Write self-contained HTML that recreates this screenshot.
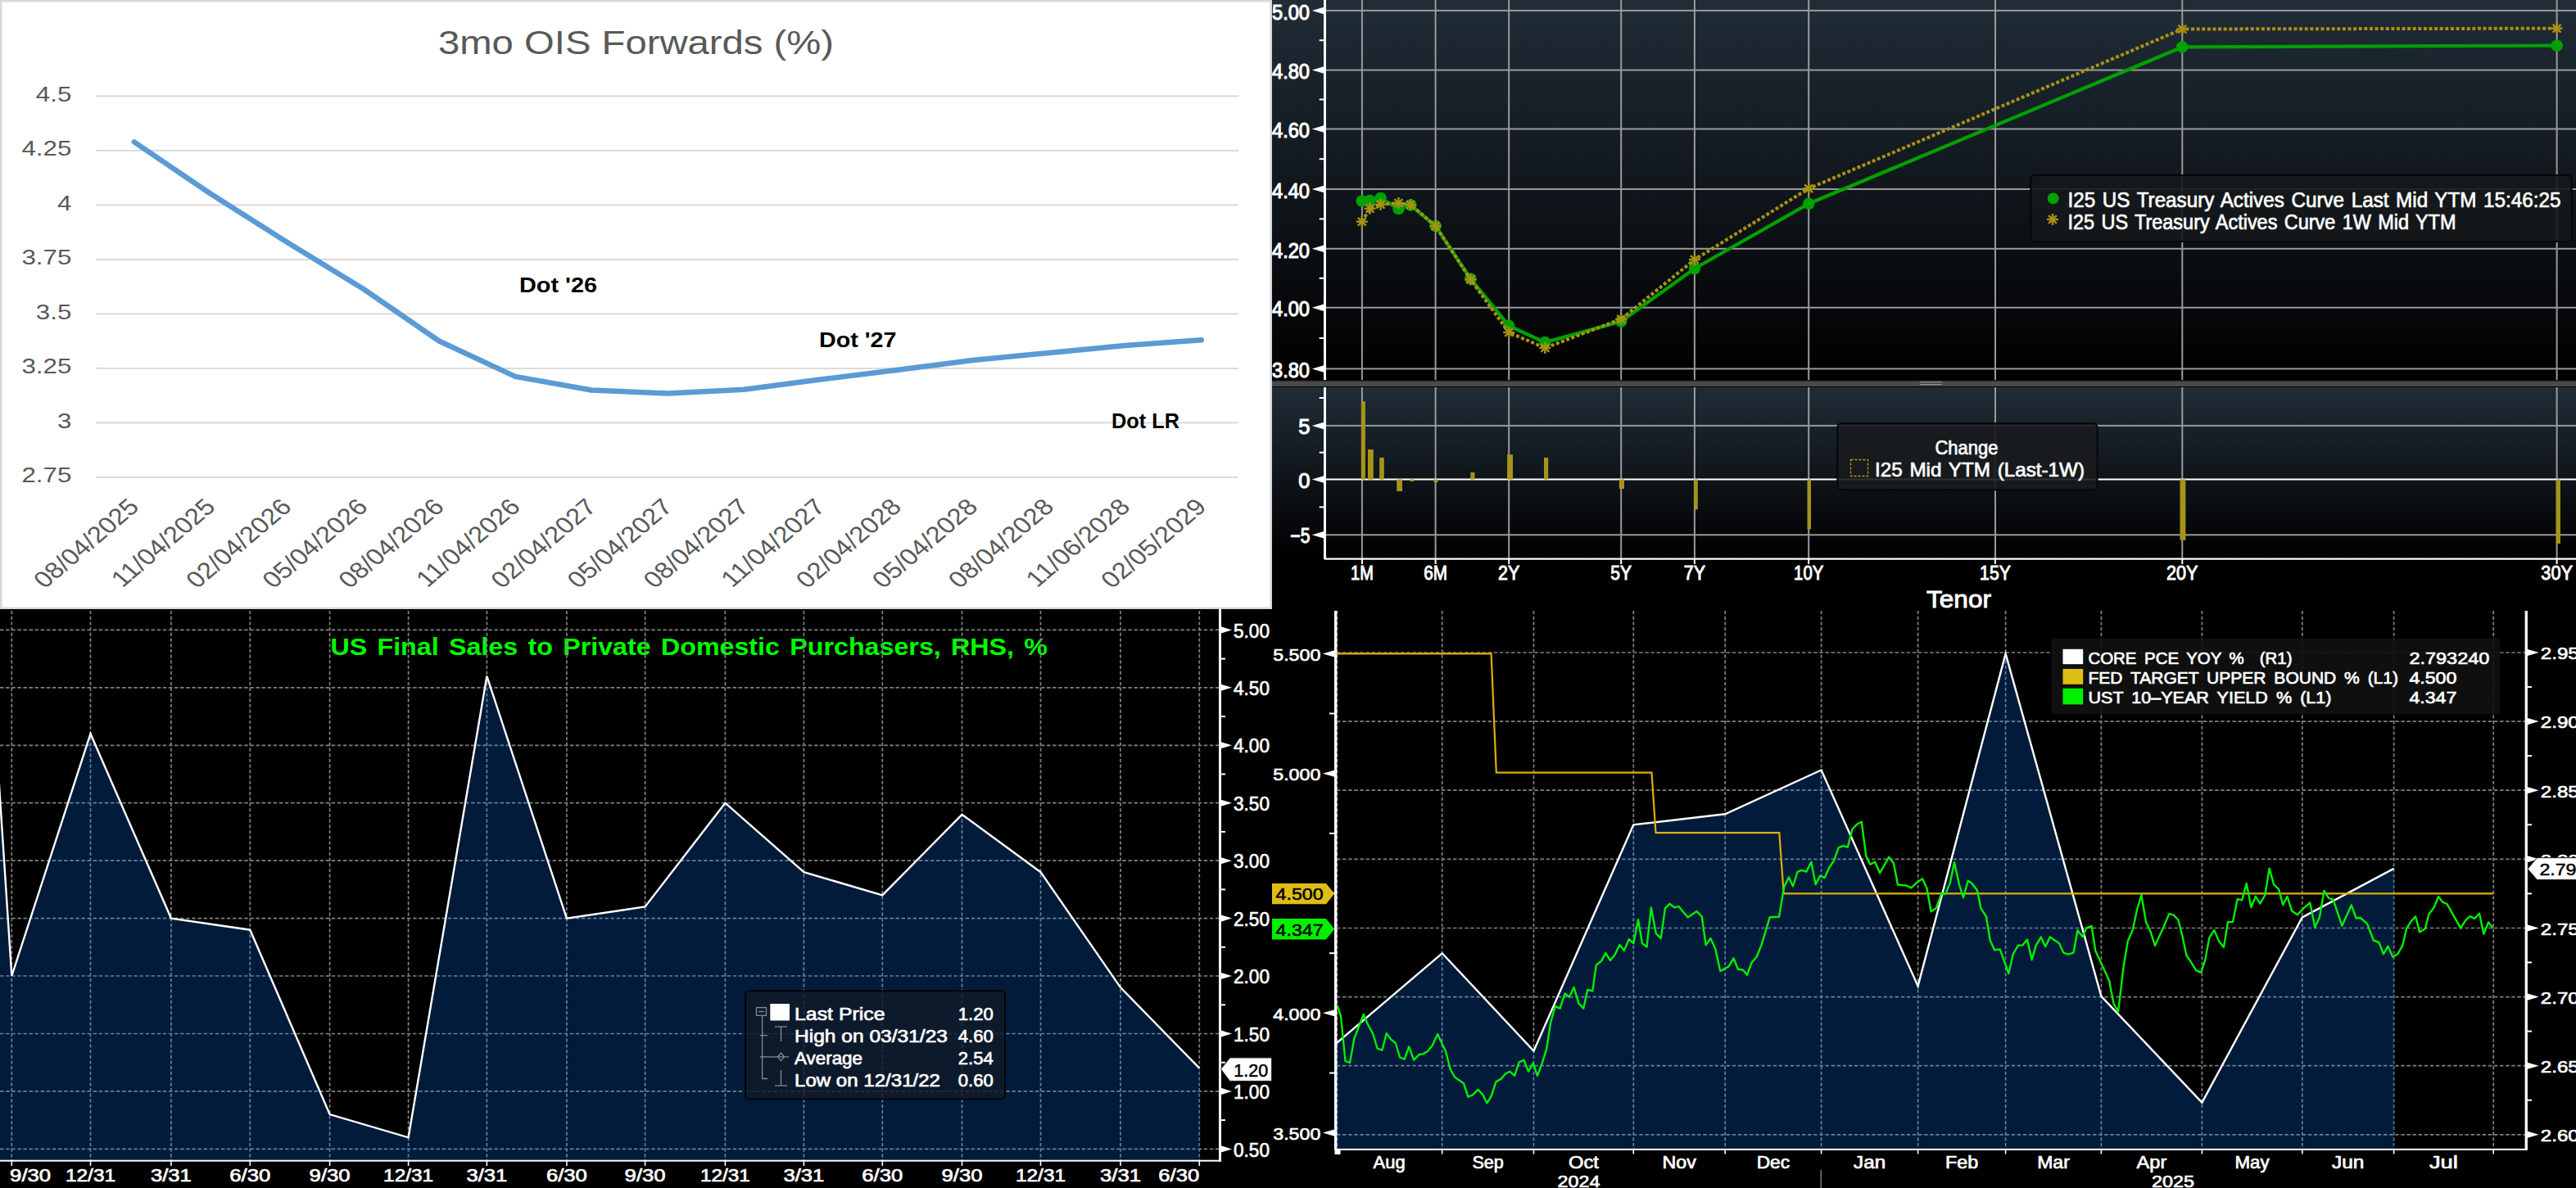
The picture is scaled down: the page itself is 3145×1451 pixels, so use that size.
<!DOCTYPE html><html><head><meta charset="utf-8"><style>html,body{margin:0;padding:0;background:#000;overflow:hidden}svg{display:block}text{font-family:"Liberation Sans", sans-serif}</style></head><body>
<svg width="3145" height="1451" viewBox="0 0 3145 1451">
<rect width="3145" height="1451" fill="#000"/>
<rect x="0" y="0" width="1553" height="744" fill="#ffffff"/>
<rect x="1" y="1" width="1551" height="742" fill="none" stroke="#d9d9d9" stroke-width="3"/>
<rect x="117" y="116.4" width="1395" height="2" fill="#d9d9d9"/>
<text x="0" y="0" font-size="26.5" fill="#595959" text-anchor="end" transform="translate(87.3,123.7) scale(1.18,1)">4.5</text>
<rect x="117" y="182.9" width="1395" height="2" fill="#d9d9d9"/>
<text x="0" y="0" font-size="26.5" fill="#595959" text-anchor="end" transform="translate(87.3,190.2) scale(1.18,1)">4.25</text>
<rect x="117" y="249.4" width="1395" height="2" fill="#d9d9d9"/>
<text x="0" y="0" font-size="26.5" fill="#595959" text-anchor="end" transform="translate(87.3,256.7) scale(1.18,1)">4</text>
<rect x="117" y="315.9" width="1395" height="2" fill="#d9d9d9"/>
<text x="0" y="0" font-size="26.5" fill="#595959" text-anchor="end" transform="translate(87.3,323.2) scale(1.18,1)">3.75</text>
<rect x="117" y="382.4" width="1395" height="2" fill="#d9d9d9"/>
<text x="0" y="0" font-size="26.5" fill="#595959" text-anchor="end" transform="translate(87.3,389.7) scale(1.18,1)">3.5</text>
<rect x="117" y="448.9" width="1395" height="2" fill="#d9d9d9"/>
<text x="0" y="0" font-size="26.5" fill="#595959" text-anchor="end" transform="translate(87.3,456.2) scale(1.18,1)">3.25</text>
<rect x="117" y="515.4" width="1395" height="2" fill="#d9d9d9"/>
<text x="0" y="0" font-size="26.5" fill="#595959" text-anchor="end" transform="translate(87.3,522.7) scale(1.18,1)">3</text>
<rect x="117" y="581.9" width="1395" height="2" fill="#d9d9d9"/>
<text x="0" y="0" font-size="26.5" fill="#595959" text-anchor="end" transform="translate(87.3,589.2) scale(1.18,1)">2.75</text>
<text x="776.5" y="66.4" font-size="41" fill="#595959" text-anchor="middle" font-weight="normal" textLength="483.0" lengthAdjust="spacingAndGlyphs" >3mo OIS Forwards (%)</text>
<polyline points="163.8,173.4 256.9,236.5 349.9,295.5 443.0,352.5 536.1,416.5 629.1,459.9 722.2,476.5 815.3,480.4 908.4,475.8 1001.4,463.5 1094.5,452.0 1187.6,440.0 1280.6,430.9 1373.7,422.0 1466.8,415.2" fill="none" stroke="#5b9bd5" stroke-width="6.5" stroke-linejoin="round" stroke-linecap="round"/>
<text x="634.0" y="357.0" font-size="25" fill="#000" text-anchor="start" font-weight="bold" textLength="95.0" lengthAdjust="spacingAndGlyphs" >Dot &#39;26</text>
<text x="1000.0" y="423.7" font-size="25" fill="#000" text-anchor="start" font-weight="bold" textLength="94.5" lengthAdjust="spacingAndGlyphs" >Dot &#39;27</text>
<text x="1357.0" y="523.0" font-size="25" fill="#000" text-anchor="start" font-weight="bold" textLength="83.0" lengthAdjust="spacingAndGlyphs" >Dot LR</text>
<text x="0" y="0" font-size="28" fill="#595959" text-anchor="end" transform="translate(171.6,620.8) scale(1.18,1) rotate(-45)">08/04/2025</text>
<text x="0" y="0" font-size="28" fill="#595959" text-anchor="end" transform="translate(264.7,620.8) scale(1.18,1) rotate(-45)">11/04/2025</text>
<text x="0" y="0" font-size="28" fill="#595959" text-anchor="end" transform="translate(357.7,620.8) scale(1.18,1) rotate(-45)">02/04/2026</text>
<text x="0" y="0" font-size="28" fill="#595959" text-anchor="end" transform="translate(450.8,620.8) scale(1.18,1) rotate(-45)">05/04/2026</text>
<text x="0" y="0" font-size="28" fill="#595959" text-anchor="end" transform="translate(543.9,620.8) scale(1.18,1) rotate(-45)">08/04/2026</text>
<text x="0" y="0" font-size="28" fill="#595959" text-anchor="end" transform="translate(636.9,620.8) scale(1.18,1) rotate(-45)">11/04/2026</text>
<text x="0" y="0" font-size="28" fill="#595959" text-anchor="end" transform="translate(730.0,620.8) scale(1.18,1) rotate(-45)">02/04/2027</text>
<text x="0" y="0" font-size="28" fill="#595959" text-anchor="end" transform="translate(823.1,620.8) scale(1.18,1) rotate(-45)">05/04/2027</text>
<text x="0" y="0" font-size="28" fill="#595959" text-anchor="end" transform="translate(916.2,620.8) scale(1.18,1) rotate(-45)">08/04/2027</text>
<text x="0" y="0" font-size="28" fill="#595959" text-anchor="end" transform="translate(1009.2,620.8) scale(1.18,1) rotate(-45)">11/04/2027</text>
<text x="0" y="0" font-size="28" fill="#595959" text-anchor="end" transform="translate(1102.3,620.8) scale(1.18,1) rotate(-45)">02/04/2028</text>
<text x="0" y="0" font-size="28" fill="#595959" text-anchor="end" transform="translate(1195.4,620.8) scale(1.18,1) rotate(-45)">05/04/2028</text>
<text x="0" y="0" font-size="28" fill="#595959" text-anchor="end" transform="translate(1288.4,620.8) scale(1.18,1) rotate(-45)">08/04/2028</text>
<text x="0" y="0" font-size="28" fill="#595959" text-anchor="end" transform="translate(1381.5,620.8) scale(1.18,1) rotate(-45)">11/06/2028</text>
<text x="0" y="0" font-size="28" fill="#595959" text-anchor="end" transform="translate(1474.6,620.8) scale(1.18,1) rotate(-45)">02/05/2029</text>
<defs><linearGradient id="gB" x1="0" y1="0" x2="0" y2="1"><stop offset="0" stop-color="#202c37"/><stop offset="1" stop-color="#000000"/></linearGradient></defs>
<rect x="1553" y="0" width="1592" height="744" fill="#000"/>
<rect x="1553" y="0" width="1592" height="465" fill="url(#gB)"/>
<rect x="1553" y="473" width="1592" height="209" fill="url(#gB)"/>
<rect x="1553" y="465" width="1592" height="7" fill="#4a4a4a"/>
<rect x="1553" y="464" width="1592" height="1.5" fill="#111"/>
<rect x="2344" y="466" width="27" height="1" fill="#999"/><rect x="2344" y="469" width="27" height="1" fill="#999"/>
<rect x="1661.9" y="0" width="2" height="464" fill="#9a9a9a"/>
<rect x="1661.9" y="473" width="2" height="209" fill="#9a9a9a"/>
<rect x="1751.6" y="0" width="2" height="464" fill="#9a9a9a"/>
<rect x="1751.6" y="473" width="2" height="209" fill="#9a9a9a"/>
<rect x="1841.2" y="0" width="2" height="464" fill="#9a9a9a"/>
<rect x="1841.2" y="473" width="2" height="209" fill="#9a9a9a"/>
<rect x="1978.2" y="0" width="2" height="464" fill="#9a9a9a"/>
<rect x="1978.2" y="473" width="2" height="209" fill="#9a9a9a"/>
<rect x="2067.9" y="0" width="2" height="464" fill="#9a9a9a"/>
<rect x="2067.9" y="473" width="2" height="209" fill="#9a9a9a"/>
<rect x="2207.2" y="0" width="2" height="464" fill="#9a9a9a"/>
<rect x="2207.2" y="473" width="2" height="209" fill="#9a9a9a"/>
<rect x="2435.0" y="0" width="2" height="464" fill="#9a9a9a"/>
<rect x="2435.0" y="473" width="2" height="209" fill="#9a9a9a"/>
<rect x="2663.3" y="0" width="2" height="464" fill="#9a9a9a"/>
<rect x="2663.3" y="473" width="2" height="209" fill="#9a9a9a"/>
<rect x="3120.6" y="0" width="2" height="464" fill="#9a9a9a"/>
<rect x="3120.6" y="473" width="2" height="209" fill="#9a9a9a"/>
<rect x="1619" y="11.9" width="1526" height="2" fill="#9a9a9a"/>
<polygon points="1601.8,12.9 1617,8.4 1617,17.4" fill="#fff"/>
<text x="1553.0" y="23.6" font-size="25.5" fill="#fff" text-anchor="start" font-weight="normal" stroke="#fff" stroke-width="1.1" textLength="46.0" lengthAdjust="spacingAndGlyphs" >5.00</text>
<rect x="1619" y="84.6" width="1526" height="2" fill="#9a9a9a"/>
<polygon points="1601.8,85.6 1617,81.1 1617,90.1" fill="#fff"/>
<text x="1553.0" y="96.3" font-size="25.5" fill="#fff" text-anchor="start" font-weight="normal" stroke="#fff" stroke-width="1.1" textLength="46.0" lengthAdjust="spacingAndGlyphs" >4.80</text>
<rect x="1619" y="156.5" width="1526" height="2" fill="#9a9a9a"/>
<polygon points="1601.8,157.5 1617,153.0 1617,162.0" fill="#fff"/>
<text x="1553.0" y="168.2" font-size="25.5" fill="#fff" text-anchor="start" font-weight="normal" stroke="#fff" stroke-width="1.1" textLength="46.0" lengthAdjust="spacingAndGlyphs" >4.60</text>
<rect x="1619" y="230.0" width="1526" height="2" fill="#9a9a9a"/>
<polygon points="1601.8,231.0 1617,226.5 1617,235.5" fill="#fff"/>
<text x="1553.0" y="241.7" font-size="25.5" fill="#fff" text-anchor="start" font-weight="normal" stroke="#fff" stroke-width="1.1" textLength="46.0" lengthAdjust="spacingAndGlyphs" >4.40</text>
<rect x="1619" y="302.8" width="1526" height="2" fill="#9a9a9a"/>
<polygon points="1601.8,303.8 1617,299.3 1617,308.3" fill="#fff"/>
<text x="1553.0" y="314.5" font-size="25.5" fill="#fff" text-anchor="start" font-weight="normal" stroke="#fff" stroke-width="1.1" textLength="46.0" lengthAdjust="spacingAndGlyphs" >4.20</text>
<rect x="1619" y="374.7" width="1526" height="2" fill="#9a9a9a"/>
<polygon points="1601.8,375.7 1617,371.2 1617,380.2" fill="#fff"/>
<text x="1553.0" y="386.4" font-size="25.5" fill="#fff" text-anchor="start" font-weight="normal" stroke="#fff" stroke-width="1.1" textLength="46.0" lengthAdjust="spacingAndGlyphs" >4.00</text>
<rect x="1619" y="449.4" width="1526" height="2" fill="#9a9a9a"/>
<polygon points="1601.8,450.4 1617,445.9 1617,454.9" fill="#fff"/>
<text x="1553.0" y="461.1" font-size="25.5" fill="#fff" text-anchor="start" font-weight="normal" stroke="#fff" stroke-width="1.1" textLength="46.0" lengthAdjust="spacingAndGlyphs" >3.80</text>
<rect x="1610.7" y="48.2" width="7" height="2" fill="#fff"/>
<rect x="1610.7" y="120.5" width="7" height="2" fill="#fff"/>
<rect x="1610.7" y="193.2" width="7" height="2" fill="#fff"/>
<rect x="1610.7" y="266.4" width="7" height="2" fill="#fff"/>
<rect x="1610.7" y="338.8" width="7" height="2" fill="#fff"/>
<rect x="1610.7" y="412.0" width="7" height="2" fill="#fff"/>
<rect x="1616" y="0" width="3" height="464" fill="#fff"/>
<polyline points="1662.8,245.5 1672.5,245.0 1685.6,242.0 1707.5,255.0 1722.2,250.5 1752.6,276.0 1795.4,340.5 1842.2,397.9 1886.3,418.1 1979.2,392.6 2068.9,328.0 2208.2,248.8 2664.3,57.4 3121.6,55.7" fill="none" stroke="#00a000" stroke-width="4.3"/>
<circle cx="1662.8" cy="245.5" r="7.3" fill="#00a000"/>
<circle cx="1672.5" cy="245" r="7.3" fill="#00a000"/>
<circle cx="1685.6" cy="242" r="7.3" fill="#00a000"/>
<circle cx="1707.5" cy="255" r="7.3" fill="#00a000"/>
<circle cx="1722.2" cy="250.5" r="7.3" fill="#00a000"/>
<circle cx="1752.6" cy="276" r="7.3" fill="#00a000"/>
<circle cx="1795.4" cy="340.5" r="7.3" fill="#00a000"/>
<circle cx="1842.2" cy="397.9" r="7.3" fill="#00a000"/>
<circle cx="1886.3" cy="418.1" r="7.3" fill="#00a000"/>
<circle cx="1979.2" cy="392.6" r="7.3" fill="#00a000"/>
<circle cx="2068.9" cy="328" r="7.3" fill="#00a000"/>
<circle cx="2208.2" cy="248.8" r="7.3" fill="#00a000"/>
<circle cx="2664.3" cy="57.4" r="7.3" fill="#00a000"/>
<circle cx="3121.6" cy="55.7" r="7.3" fill="#00a000"/>
<polyline points="1662.8,270.7 1672.5,254.7 1685.6,249.7 1707.5,248.0 1722.2,250.0 1752.6,276.0 1795.4,341.3 1842.2,406.0 1886.3,425.0 1979.2,389.8 2068.9,317.1 2208.2,230.3 2664.3,35.5 3121.6,34.7" fill="none" stroke="#a89214" stroke-width="4" stroke-dasharray="4,2.6"/>
<line x1="1655.8" y1="270.7" x2="1669.8" y2="270.7" stroke="#a89214" stroke-width="2.4"/><line x1="1657.9" y1="265.8" x2="1667.7" y2="275.6" stroke="#a89214" stroke-width="2.4"/><line x1="1662.8" y1="263.7" x2="1662.8" y2="277.7" stroke="#a89214" stroke-width="2.4"/><line x1="1667.7" y1="265.8" x2="1657.9" y2="275.6" stroke="#a89214" stroke-width="2.4"/>
<line x1="1665.5" y1="254.7" x2="1679.5" y2="254.7" stroke="#a89214" stroke-width="2.4"/><line x1="1667.6" y1="249.8" x2="1677.4" y2="259.6" stroke="#a89214" stroke-width="2.4"/><line x1="1672.5" y1="247.7" x2="1672.5" y2="261.7" stroke="#a89214" stroke-width="2.4"/><line x1="1677.4" y1="249.8" x2="1667.6" y2="259.6" stroke="#a89214" stroke-width="2.4"/>
<line x1="1678.6" y1="249.7" x2="1692.6" y2="249.7" stroke="#a89214" stroke-width="2.4"/><line x1="1680.7" y1="244.8" x2="1690.5" y2="254.6" stroke="#a89214" stroke-width="2.4"/><line x1="1685.6" y1="242.7" x2="1685.6" y2="256.7" stroke="#a89214" stroke-width="2.4"/><line x1="1690.5" y1="244.8" x2="1680.7" y2="254.6" stroke="#a89214" stroke-width="2.4"/>
<line x1="1700.5" y1="248.0" x2="1714.5" y2="248.0" stroke="#a89214" stroke-width="2.4"/><line x1="1702.6" y1="243.1" x2="1712.4" y2="252.9" stroke="#a89214" stroke-width="2.4"/><line x1="1707.5" y1="241.0" x2="1707.5" y2="255.0" stroke="#a89214" stroke-width="2.4"/><line x1="1712.4" y1="243.1" x2="1702.6" y2="252.9" stroke="#a89214" stroke-width="2.4"/>
<line x1="1715.2" y1="250.0" x2="1729.2" y2="250.0" stroke="#a89214" stroke-width="2.4"/><line x1="1717.3" y1="245.1" x2="1727.1" y2="254.9" stroke="#a89214" stroke-width="2.4"/><line x1="1722.2" y1="243.0" x2="1722.2" y2="257.0" stroke="#a89214" stroke-width="2.4"/><line x1="1727.1" y1="245.1" x2="1717.3" y2="254.9" stroke="#a89214" stroke-width="2.4"/>
<line x1="1745.6" y1="276.0" x2="1759.6" y2="276.0" stroke="#a89214" stroke-width="2.4"/><line x1="1747.7" y1="271.1" x2="1757.5" y2="280.9" stroke="#a89214" stroke-width="2.4"/><line x1="1752.6" y1="269.0" x2="1752.6" y2="283.0" stroke="#a89214" stroke-width="2.4"/><line x1="1757.5" y1="271.1" x2="1747.7" y2="280.9" stroke="#a89214" stroke-width="2.4"/>
<line x1="1788.4" y1="341.3" x2="1802.4" y2="341.3" stroke="#a89214" stroke-width="2.4"/><line x1="1790.5" y1="336.4" x2="1800.3" y2="346.2" stroke="#a89214" stroke-width="2.4"/><line x1="1795.4" y1="334.3" x2="1795.4" y2="348.3" stroke="#a89214" stroke-width="2.4"/><line x1="1800.3" y1="336.4" x2="1790.5" y2="346.2" stroke="#a89214" stroke-width="2.4"/>
<line x1="1835.2" y1="406.0" x2="1849.2" y2="406.0" stroke="#a89214" stroke-width="2.4"/><line x1="1837.3" y1="401.1" x2="1847.1" y2="410.9" stroke="#a89214" stroke-width="2.4"/><line x1="1842.2" y1="399.0" x2="1842.2" y2="413.0" stroke="#a89214" stroke-width="2.4"/><line x1="1847.1" y1="401.1" x2="1837.3" y2="410.9" stroke="#a89214" stroke-width="2.4"/>
<line x1="1879.3" y1="425.0" x2="1893.3" y2="425.0" stroke="#a89214" stroke-width="2.4"/><line x1="1881.4" y1="420.1" x2="1891.2" y2="429.9" stroke="#a89214" stroke-width="2.4"/><line x1="1886.3" y1="418.0" x2="1886.3" y2="432.0" stroke="#a89214" stroke-width="2.4"/><line x1="1891.2" y1="420.1" x2="1881.4" y2="429.9" stroke="#a89214" stroke-width="2.4"/>
<line x1="1972.2" y1="389.8" x2="1986.2" y2="389.8" stroke="#a89214" stroke-width="2.4"/><line x1="1974.3" y1="384.9" x2="1984.1" y2="394.7" stroke="#a89214" stroke-width="2.4"/><line x1="1979.2" y1="382.8" x2="1979.2" y2="396.8" stroke="#a89214" stroke-width="2.4"/><line x1="1984.1" y1="384.9" x2="1974.3" y2="394.7" stroke="#a89214" stroke-width="2.4"/>
<line x1="2061.9" y1="317.1" x2="2075.9" y2="317.1" stroke="#a89214" stroke-width="2.4"/><line x1="2064.0" y1="312.2" x2="2073.8" y2="322.0" stroke="#a89214" stroke-width="2.4"/><line x1="2068.9" y1="310.1" x2="2068.9" y2="324.1" stroke="#a89214" stroke-width="2.4"/><line x1="2073.8" y1="312.2" x2="2064.0" y2="322.0" stroke="#a89214" stroke-width="2.4"/>
<line x1="2201.2" y1="230.3" x2="2215.2" y2="230.3" stroke="#a89214" stroke-width="2.4"/><line x1="2203.3" y1="225.4" x2="2213.1" y2="235.2" stroke="#a89214" stroke-width="2.4"/><line x1="2208.2" y1="223.3" x2="2208.2" y2="237.3" stroke="#a89214" stroke-width="2.4"/><line x1="2213.1" y1="225.4" x2="2203.3" y2="235.2" stroke="#a89214" stroke-width="2.4"/>
<line x1="2657.3" y1="35.5" x2="2671.3" y2="35.5" stroke="#a89214" stroke-width="2.4"/><line x1="2659.4" y1="30.6" x2="2669.2" y2="40.4" stroke="#a89214" stroke-width="2.4"/><line x1="2664.3" y1="28.5" x2="2664.3" y2="42.5" stroke="#a89214" stroke-width="2.4"/><line x1="2669.2" y1="30.6" x2="2659.4" y2="40.4" stroke="#a89214" stroke-width="2.4"/>
<line x1="3114.6" y1="34.7" x2="3128.6" y2="34.7" stroke="#a89214" stroke-width="2.4"/><line x1="3116.7" y1="29.8" x2="3126.5" y2="39.6" stroke="#a89214" stroke-width="2.4"/><line x1="3121.6" y1="27.7" x2="3121.6" y2="41.7" stroke="#a89214" stroke-width="2.4"/><line x1="3126.5" y1="29.8" x2="3116.7" y2="39.6" stroke="#a89214" stroke-width="2.4"/>
<rect x="2479.3" y="214" width="660.4" height="80.9" rx="5" fill="#15181b" fill-opacity="0.9" stroke="#070707" stroke-width="2"/>
<circle cx="2506.7" cy="242.4" r="7" fill="#00a000"/>
<line x1="2499.0" y1="268.0" x2="2513.0" y2="268.0" stroke="#a89214" stroke-width="2.4"/><line x1="2501.1" y1="263.1" x2="2510.9" y2="272.9" stroke="#a89214" stroke-width="2.4"/><line x1="2506.0" y1="261.0" x2="2506.0" y2="275.0" stroke="#a89214" stroke-width="2.4"/><line x1="2510.9" y1="263.1" x2="2501.1" y2="272.9" stroke="#a89214" stroke-width="2.4"/>
<text x="2524.5" y="252.5" font-size="26" fill="#fff" text-anchor="start" font-weight="normal" stroke="#fff" stroke-width="0.7" word-spacing="2" xml:space="preserve" textLength="602.0" lengthAdjust="spacingAndGlyphs" >I25 US Treasury Actives Curve Last Mid YTM 15:46:25</text>
<text x="2524.5" y="279.5" font-size="26" fill="#fff" text-anchor="start" font-weight="normal" stroke="#fff" stroke-width="0.7" word-spacing="2" xml:space="preserve" textLength="474.0" lengthAdjust="spacingAndGlyphs" >I25 US Treasury Actives Curve 1W Mid YTM</text>
<rect x="1616" y="473" width="3" height="210" fill="#fff"/>
<rect x="1617" y="681.5" width="1528" height="2.2" fill="#fff"/>
<rect x="1619" y="518.9" width="1526" height="2" fill="#9a9a9a"/>
<rect x="1619" y="652.3" width="1526" height="2" fill="#9a9a9a"/>
<rect x="1619" y="584.5" width="1526" height="2" fill="#fff"/>
<polygon points="1601.8,519.9 1617,515.4 1617,524.4" fill="#fff"/>
<text x="1599.4" y="529.9" font-size="25.5" fill="#fff" text-anchor="end" font-weight="normal" stroke="#fff" stroke-width="1.1" >5</text>
<polygon points="1601.8,585.5 1617,581.0 1617,590.0" fill="#fff"/>
<text x="1599.4" y="595.5" font-size="25.5" fill="#fff" text-anchor="end" font-weight="normal" stroke="#fff" stroke-width="1.1" >0</text>
<polygon points="1601.8,653.3 1617,648.8 1617,657.8" fill="#fff"/>
<text x="1599.4" y="663.3" font-size="25.5" fill="#fff" text-anchor="end" font-weight="normal" stroke="#fff" stroke-width="1.1" textLength="24.0" lengthAdjust="spacingAndGlyphs" >&#x2212;5</text>
<rect x="1610.7" y="485.0" width="7" height="2" fill="#fff"/>
<rect x="1610.7" y="551.7" width="7" height="2" fill="#fff"/>
<rect x="1610.7" y="618.4" width="7" height="2" fill="#fff"/>
<rect x="1661.9" y="490.2" width="5" height="95.3" fill="#a6941a"/>
<rect x="1670" y="549" width="6.8" height="36.5" fill="#a6941a"/>
<rect x="1684.2" y="558.9" width="5.6" height="26.6" fill="#a6941a"/>
<rect x="1705.2" y="585.5" width="6.8" height="14.5" fill="#a6941a"/>
<rect x="1721.6" y="585.5" width="4.7" height="2.5" fill="#a6941a"/>
<rect x="1750.4" y="585.5" width="5" height="3.7" fill="#a6941a"/>
<rect x="1795.3" y="576.9" width="5.2" height="8.6" fill="#a6941a"/>
<rect x="1840.1" y="555.2" width="6.9" height="30.3" fill="#a6941a"/>
<rect x="1885" y="558.9" width="5.2" height="26.6" fill="#a6941a"/>
<rect x="1976.9" y="585.5" width="6.1" height="11.5" fill="#a6941a"/>
<rect x="2068.2" y="585.5" width="4.6" height="36.8" fill="#a6941a"/>
<rect x="2206.5" y="585.5" width="4.5" height="61.0" fill="#a6941a"/>
<rect x="2661.5" y="585.5" width="6.9" height="74.3" fill="#a6941a"/>
<rect x="3120.8" y="585.5" width="5.1" height="78.4" fill="#a6941a"/>
<rect x="1661.9" y="683" width="2" height="6" fill="#fff"/>
<text x="1662.9" y="708.4" font-size="24.5" fill="#fff" text-anchor="middle" font-weight="normal" stroke="#fff" stroke-width="1.0" textLength="27.8" lengthAdjust="spacingAndGlyphs" >1M</text>
<rect x="1751.6" y="683" width="2" height="6" fill="#fff"/>
<text x="1752.6" y="708.4" font-size="24.5" fill="#fff" text-anchor="middle" font-weight="normal" stroke="#fff" stroke-width="1.0" textLength="28.8" lengthAdjust="spacingAndGlyphs" >6M</text>
<rect x="1841.2" y="683" width="2" height="6" fill="#fff"/>
<text x="1842.2" y="708.4" font-size="24.5" fill="#fff" text-anchor="middle" font-weight="normal" stroke="#fff" stroke-width="1.0" textLength="26.3" lengthAdjust="spacingAndGlyphs" >2Y</text>
<rect x="1978.2" y="683" width="2" height="6" fill="#fff"/>
<text x="1979.2" y="708.4" font-size="24.5" fill="#fff" text-anchor="middle" font-weight="normal" stroke="#fff" stroke-width="1.0" textLength="25.7" lengthAdjust="spacingAndGlyphs" >5Y</text>
<rect x="2067.9" y="683" width="2" height="6" fill="#fff"/>
<text x="2068.9" y="708.4" font-size="24.5" fill="#fff" text-anchor="middle" font-weight="normal" stroke="#fff" stroke-width="1.0" textLength="26.3" lengthAdjust="spacingAndGlyphs" >7Y</text>
<rect x="2207.2" y="683" width="2" height="6" fill="#fff"/>
<text x="2208.2" y="708.4" font-size="24.5" fill="#fff" text-anchor="middle" font-weight="normal" stroke="#fff" stroke-width="1.0" textLength="36.2" lengthAdjust="spacingAndGlyphs" >10Y</text>
<rect x="2435.0" y="683" width="2" height="6" fill="#fff"/>
<text x="2436.0" y="708.4" font-size="24.5" fill="#fff" text-anchor="middle" font-weight="normal" stroke="#fff" stroke-width="1.0" textLength="37.8" lengthAdjust="spacingAndGlyphs" >15Y</text>
<rect x="2663.3" y="683" width="2" height="6" fill="#fff"/>
<text x="2664.3" y="708.4" font-size="24.5" fill="#fff" text-anchor="middle" font-weight="normal" stroke="#fff" stroke-width="1.0" textLength="38.5" lengthAdjust="spacingAndGlyphs" >20Y</text>
<rect x="3120.6" y="683" width="2" height="6" fill="#fff"/>
<text x="3121.6" y="708.4" font-size="24.5" fill="#fff" text-anchor="middle" font-weight="normal" stroke="#fff" stroke-width="1.0" textLength="38.5" lengthAdjust="spacingAndGlyphs" >30Y</text>
<text x="2391.5" y="742.4" font-size="29.5" fill="#fff" text-anchor="middle" font-weight="normal" stroke="#fff" stroke-width="0.9" textLength="79.0" lengthAdjust="spacingAndGlyphs" >Tenor</text>
<rect x="2243.3" y="517.1" width="317.3" height="81.1" rx="5" fill="#181b1e" fill-opacity="0.9" stroke="#070707" stroke-width="2"/>
<text x="2401.0" y="555.3" font-size="24" fill="#fff" text-anchor="middle" font-weight="normal" stroke="#fff" stroke-width="0.7" textLength="77.0" lengthAdjust="spacingAndGlyphs" >Change</text>
<rect x="2259.5" y="561.5" width="21" height="20" fill="none" stroke="#c0a000" stroke-width="1.3" stroke-dasharray="3,2"/>
<text x="2289.0" y="582.0" font-size="24" fill="#fff" text-anchor="start" font-weight="normal" stroke="#fff" stroke-width="0.7" word-spacing="2" xml:space="preserve" textLength="256.0" lengthAdjust="spacingAndGlyphs" >I25 Mid YTM (Last-1W)</text>
<rect x="0" y="744" width="1553" height="707" fill="#000"/>
<clipPath id="cC"><rect x="0" y="744" width="1488" height="673"/></clipPath>
<polygon clip-path="url(#cC)" points="-82.5,-281.3 14.3,1192.0 110.5,896.2 208.9,1121.6 305.3,1135.7 402.6,1361.1 498.6,1389.3 594.4,825.8 691.9,1121.6 787.6,1107.5 885.4,980.7 981.4,1065.2 1077.3,1093.4 1174.5,994.8 1270.5,1065.2 1368.0,1206.1 1464.3,1304.7 1464.2,1417.0 -82.5,1417.0" fill="#021b3b"/>
<text x="403.4" y="800.2" font-size="28.8" fill="#00ff00" text-anchor="start" font-weight="bold" word-spacing="3" xml:space="preserve" textLength="875.6" lengthAdjust="spacingAndGlyphs" >US Final Sales to Private Domestic Purchasers, RHS, %</text>
<clipPath id="fC"><polygon points="-82.5,-281.3 14.3,1192.0 110.5,896.2 208.9,1121.6 305.3,1135.7 402.6,1361.1 498.6,1389.3 594.4,825.8 691.9,1121.6 787.6,1107.5 885.4,980.7 981.4,1065.2 1077.3,1093.4 1174.5,994.8 1270.5,1065.2 1368.0,1206.1 1464.3,1304.7 1464.2,1417.0 -82.5,1417.0"/></clipPath>
<g ><rect x="0" y="744" width="1488" height="673" fill="#000" fill-opacity="0"/>
<line x1="14.3" y1="746" x2="14.3" y2="1417" stroke="#808080" stroke-width="1.7" stroke-dasharray="4.2,2.5" stroke-opacity="1"/>
<line x1="110.5" y1="746" x2="110.5" y2="1417" stroke="#808080" stroke-width="1.7" stroke-dasharray="4.2,2.5" stroke-opacity="1"/>
<line x1="208.9" y1="746" x2="208.9" y2="1417" stroke="#808080" stroke-width="1.7" stroke-dasharray="4.2,2.5" stroke-opacity="1"/>
<line x1="305.3" y1="746" x2="305.3" y2="1417" stroke="#808080" stroke-width="1.7" stroke-dasharray="4.2,2.5" stroke-opacity="1"/>
<line x1="402.6" y1="746" x2="402.6" y2="1417" stroke="#808080" stroke-width="1.7" stroke-dasharray="4.2,2.5" stroke-opacity="1"/>
<line x1="498.6" y1="746" x2="498.6" y2="1417" stroke="#808080" stroke-width="1.7" stroke-dasharray="4.2,2.5" stroke-opacity="1"/>
<line x1="594.4" y1="746" x2="594.4" y2="1417" stroke="#808080" stroke-width="1.7" stroke-dasharray="4.2,2.5" stroke-opacity="1"/>
<line x1="691.9" y1="746" x2="691.9" y2="1417" stroke="#808080" stroke-width="1.7" stroke-dasharray="4.2,2.5" stroke-opacity="1"/>
<line x1="787.6" y1="746" x2="787.6" y2="1417" stroke="#808080" stroke-width="1.7" stroke-dasharray="4.2,2.5" stroke-opacity="1"/>
<line x1="885.4" y1="746" x2="885.4" y2="1417" stroke="#808080" stroke-width="1.7" stroke-dasharray="4.2,2.5" stroke-opacity="1"/>
<line x1="981.4" y1="746" x2="981.4" y2="1417" stroke="#808080" stroke-width="1.7" stroke-dasharray="4.2,2.5" stroke-opacity="1"/>
<line x1="1077.3" y1="746" x2="1077.3" y2="1417" stroke="#808080" stroke-width="1.7" stroke-dasharray="4.2,2.5" stroke-opacity="1"/>
<line x1="1174.5" y1="746" x2="1174.5" y2="1417" stroke="#808080" stroke-width="1.7" stroke-dasharray="4.2,2.5" stroke-opacity="1"/>
<line x1="1270.5" y1="746" x2="1270.5" y2="1417" stroke="#808080" stroke-width="1.7" stroke-dasharray="4.2,2.5" stroke-opacity="1"/>
<line x1="1368.0" y1="746" x2="1368.0" y2="1417" stroke="#808080" stroke-width="1.7" stroke-dasharray="4.2,2.5" stroke-opacity="1"/>
<line x1="1464.3" y1="746" x2="1464.3" y2="1417" stroke="#808080" stroke-width="1.7" stroke-dasharray="4.2,2.5" stroke-opacity="1"/>
<line x1="0" y1="769.4" x2="1488" y2="769.4" stroke="#808080" stroke-width="1.7" stroke-dasharray="4.5,2.6" stroke-opacity="1"/>
<line x1="0" y1="839.8" x2="1488" y2="839.8" stroke="#808080" stroke-width="1.7" stroke-dasharray="4.5,2.6" stroke-opacity="1"/>
<line x1="0" y1="910.3" x2="1488" y2="910.3" stroke="#808080" stroke-width="1.7" stroke-dasharray="4.5,2.6" stroke-opacity="1"/>
<line x1="0" y1="980.7" x2="1488" y2="980.7" stroke="#808080" stroke-width="1.7" stroke-dasharray="4.5,2.6" stroke-opacity="1"/>
<line x1="0" y1="1051.2" x2="1488" y2="1051.2" stroke="#808080" stroke-width="1.7" stroke-dasharray="4.5,2.6" stroke-opacity="1"/>
<line x1="0" y1="1121.6" x2="1488" y2="1121.6" stroke="#808080" stroke-width="1.7" stroke-dasharray="4.5,2.6" stroke-opacity="1"/>
<line x1="0" y1="1192.0" x2="1488" y2="1192.0" stroke="#808080" stroke-width="1.7" stroke-dasharray="4.5,2.6" stroke-opacity="1"/>
<line x1="0" y1="1262.5" x2="1488" y2="1262.5" stroke="#808080" stroke-width="1.7" stroke-dasharray="4.5,2.6" stroke-opacity="1"/>
<line x1="0" y1="1332.9" x2="1488" y2="1332.9" stroke="#808080" stroke-width="1.7" stroke-dasharray="4.5,2.6" stroke-opacity="1"/>
<line x1="0" y1="1403.4" x2="1488" y2="1403.4" stroke="#808080" stroke-width="1.7" stroke-dasharray="4.5,2.6" stroke-opacity="1"/>
</g>
<g clip-path="url(#fC)"><rect x="0" y="744" width="1488" height="673" fill="#021b3b" fill-opacity="1"/>
<line x1="14.3" y1="746" x2="14.3" y2="1417" stroke="#63809f" stroke-width="1.7" stroke-dasharray="4.2,2.5" stroke-opacity="1"/>
<line x1="110.5" y1="746" x2="110.5" y2="1417" stroke="#63809f" stroke-width="1.7" stroke-dasharray="4.2,2.5" stroke-opacity="1"/>
<line x1="208.9" y1="746" x2="208.9" y2="1417" stroke="#63809f" stroke-width="1.7" stroke-dasharray="4.2,2.5" stroke-opacity="1"/>
<line x1="305.3" y1="746" x2="305.3" y2="1417" stroke="#63809f" stroke-width="1.7" stroke-dasharray="4.2,2.5" stroke-opacity="1"/>
<line x1="402.6" y1="746" x2="402.6" y2="1417" stroke="#63809f" stroke-width="1.7" stroke-dasharray="4.2,2.5" stroke-opacity="1"/>
<line x1="498.6" y1="746" x2="498.6" y2="1417" stroke="#63809f" stroke-width="1.7" stroke-dasharray="4.2,2.5" stroke-opacity="1"/>
<line x1="594.4" y1="746" x2="594.4" y2="1417" stroke="#63809f" stroke-width="1.7" stroke-dasharray="4.2,2.5" stroke-opacity="1"/>
<line x1="691.9" y1="746" x2="691.9" y2="1417" stroke="#63809f" stroke-width="1.7" stroke-dasharray="4.2,2.5" stroke-opacity="1"/>
<line x1="787.6" y1="746" x2="787.6" y2="1417" stroke="#63809f" stroke-width="1.7" stroke-dasharray="4.2,2.5" stroke-opacity="1"/>
<line x1="885.4" y1="746" x2="885.4" y2="1417" stroke="#63809f" stroke-width="1.7" stroke-dasharray="4.2,2.5" stroke-opacity="1"/>
<line x1="981.4" y1="746" x2="981.4" y2="1417" stroke="#63809f" stroke-width="1.7" stroke-dasharray="4.2,2.5" stroke-opacity="1"/>
<line x1="1077.3" y1="746" x2="1077.3" y2="1417" stroke="#63809f" stroke-width="1.7" stroke-dasharray="4.2,2.5" stroke-opacity="1"/>
<line x1="1174.5" y1="746" x2="1174.5" y2="1417" stroke="#63809f" stroke-width="1.7" stroke-dasharray="4.2,2.5" stroke-opacity="1"/>
<line x1="1270.5" y1="746" x2="1270.5" y2="1417" stroke="#63809f" stroke-width="1.7" stroke-dasharray="4.2,2.5" stroke-opacity="1"/>
<line x1="1368.0" y1="746" x2="1368.0" y2="1417" stroke="#63809f" stroke-width="1.7" stroke-dasharray="4.2,2.5" stroke-opacity="1"/>
<line x1="1464.3" y1="746" x2="1464.3" y2="1417" stroke="#63809f" stroke-width="1.7" stroke-dasharray="4.2,2.5" stroke-opacity="1"/>
<line x1="0" y1="769.4" x2="1488" y2="769.4" stroke="#63809f" stroke-width="1.7" stroke-dasharray="4.5,2.6" stroke-opacity="1"/>
<line x1="0" y1="839.8" x2="1488" y2="839.8" stroke="#63809f" stroke-width="1.7" stroke-dasharray="4.5,2.6" stroke-opacity="1"/>
<line x1="0" y1="910.3" x2="1488" y2="910.3" stroke="#63809f" stroke-width="1.7" stroke-dasharray="4.5,2.6" stroke-opacity="1"/>
<line x1="0" y1="980.7" x2="1488" y2="980.7" stroke="#63809f" stroke-width="1.7" stroke-dasharray="4.5,2.6" stroke-opacity="1"/>
<line x1="0" y1="1051.2" x2="1488" y2="1051.2" stroke="#63809f" stroke-width="1.7" stroke-dasharray="4.5,2.6" stroke-opacity="1"/>
<line x1="0" y1="1121.6" x2="1488" y2="1121.6" stroke="#63809f" stroke-width="1.7" stroke-dasharray="4.5,2.6" stroke-opacity="1"/>
<line x1="0" y1="1192.0" x2="1488" y2="1192.0" stroke="#63809f" stroke-width="1.7" stroke-dasharray="4.5,2.6" stroke-opacity="1"/>
<line x1="0" y1="1262.5" x2="1488" y2="1262.5" stroke="#63809f" stroke-width="1.7" stroke-dasharray="4.5,2.6" stroke-opacity="1"/>
<line x1="0" y1="1332.9" x2="1488" y2="1332.9" stroke="#63809f" stroke-width="1.7" stroke-dasharray="4.5,2.6" stroke-opacity="1"/>
<line x1="0" y1="1403.4" x2="1488" y2="1403.4" stroke="#63809f" stroke-width="1.7" stroke-dasharray="4.5,2.6" stroke-opacity="1"/>
</g>
<polyline clip-path="url(#cC)" points="-82.5,-281.3 14.3,1192.0 110.5,896.2 208.9,1121.6 305.3,1135.7 402.6,1361.1 498.6,1389.3 594.4,825.8 691.9,1121.6 787.6,1107.5 885.4,980.7 981.4,1065.2 1077.3,1093.4 1174.5,994.8 1270.5,1065.2 1368.0,1206.1 1464.3,1304.7" fill="none" stroke="#fff" stroke-width="2.4" stroke-linejoin="miter"/>
<rect x="1488" y="744" width="3" height="675" fill="#fff"/>
<rect x="0" y="1416.7" width="1491" height="2" fill="#fff"/>
<polygon points="1490,765.1 1504,769.4 1490,773.7" fill="#fff"/>
<text x="1506.0" y="778.5" font-size="23.5" fill="#fff" text-anchor="start" font-weight="normal" stroke="#fff" stroke-width="0.7" textLength="44.0" lengthAdjust="spacingAndGlyphs" >5.00</text>
<rect x="1490" y="803.6" width="6" height="2" fill="#fff"/>
<polygon points="1490,835.5 1504,839.8 1490,844.1" fill="#fff"/>
<text x="1506.0" y="848.9" font-size="23.5" fill="#fff" text-anchor="start" font-weight="normal" stroke="#fff" stroke-width="0.7" textLength="44.0" lengthAdjust="spacingAndGlyphs" >4.50</text>
<rect x="1490" y="874.1" width="6" height="2" fill="#fff"/>
<polygon points="1490,906.0 1504,910.3 1490,914.6" fill="#fff"/>
<text x="1506.0" y="919.4" font-size="23.5" fill="#fff" text-anchor="start" font-weight="normal" stroke="#fff" stroke-width="0.7" textLength="44.0" lengthAdjust="spacingAndGlyphs" >4.00</text>
<rect x="1490" y="944.5" width="6" height="2" fill="#fff"/>
<polygon points="1490,976.4 1504,980.7 1490,985.0" fill="#fff"/>
<text x="1506.0" y="989.8" font-size="23.5" fill="#fff" text-anchor="start" font-weight="normal" stroke="#fff" stroke-width="0.7" textLength="44.0" lengthAdjust="spacingAndGlyphs" >3.50</text>
<rect x="1490" y="1014.9" width="6" height="2" fill="#fff"/>
<polygon points="1490,1046.9 1504,1051.2 1490,1055.5" fill="#fff"/>
<text x="1506.0" y="1060.3" font-size="23.5" fill="#fff" text-anchor="start" font-weight="normal" stroke="#fff" stroke-width="0.7" textLength="44.0" lengthAdjust="spacingAndGlyphs" >3.00</text>
<rect x="1490" y="1085.4" width="6" height="2" fill="#fff"/>
<polygon points="1490,1117.3 1504,1121.6 1490,1125.9" fill="#fff"/>
<text x="1506.0" y="1130.7" font-size="23.5" fill="#fff" text-anchor="start" font-weight="normal" stroke="#fff" stroke-width="0.7" textLength="44.0" lengthAdjust="spacingAndGlyphs" >2.50</text>
<rect x="1490" y="1155.8" width="6" height="2" fill="#fff"/>
<polygon points="1490,1187.7 1504,1192.0 1490,1196.3" fill="#fff"/>
<text x="1506.0" y="1201.1" font-size="23.5" fill="#fff" text-anchor="start" font-weight="normal" stroke="#fff" stroke-width="0.7" textLength="44.0" lengthAdjust="spacingAndGlyphs" >2.00</text>
<rect x="1490" y="1226.3" width="6" height="2" fill="#fff"/>
<polygon points="1490,1258.2 1504,1262.5 1490,1266.8" fill="#fff"/>
<text x="1506.0" y="1271.6" font-size="23.5" fill="#fff" text-anchor="start" font-weight="normal" stroke="#fff" stroke-width="0.7" textLength="44.0" lengthAdjust="spacingAndGlyphs" >1.50</text>
<rect x="1490" y="1296.7" width="6" height="2" fill="#fff"/>
<polygon points="1490,1328.6 1504,1332.9 1490,1337.2" fill="#fff"/>
<text x="1506.0" y="1342.0" font-size="23.5" fill="#fff" text-anchor="start" font-weight="normal" stroke="#fff" stroke-width="0.7" textLength="44.0" lengthAdjust="spacingAndGlyphs" >1.00</text>
<rect x="1490" y="1367.1" width="6" height="2" fill="#fff"/>
<polygon points="1490,1399.1 1504,1403.4 1490,1407.7" fill="#fff"/>
<text x="1506.0" y="1412.5" font-size="23.5" fill="#fff" text-anchor="start" font-weight="normal" stroke="#fff" stroke-width="0.7" textLength="44.0" lengthAdjust="spacingAndGlyphs" >0.50</text>
<rect x="13.5" y="1418" width="1.6" height="6" fill="#fff"/>
<rect x="109.7" y="1418" width="1.6" height="6" fill="#fff"/>
<rect x="208.1" y="1418" width="1.6" height="6" fill="#fff"/>
<rect x="304.5" y="1418" width="1.6" height="6" fill="#fff"/>
<rect x="401.8" y="1418" width="1.6" height="6" fill="#fff"/>
<rect x="497.8" y="1418" width="1.6" height="6" fill="#fff"/>
<rect x="593.6" y="1418" width="1.6" height="6" fill="#fff"/>
<rect x="691.1" y="1418" width="1.6" height="6" fill="#fff"/>
<rect x="786.8" y="1418" width="1.6" height="6" fill="#fff"/>
<rect x="884.6" y="1418" width="1.6" height="6" fill="#fff"/>
<rect x="980.6" y="1418" width="1.6" height="6" fill="#fff"/>
<rect x="1076.5" y="1418" width="1.6" height="6" fill="#fff"/>
<rect x="1173.7" y="1418" width="1.6" height="6" fill="#fff"/>
<rect x="1269.7" y="1418" width="1.6" height="6" fill="#fff"/>
<rect x="1367.2" y="1418" width="1.6" height="6" fill="#fff"/>
<rect x="1463.5" y="1418" width="1.6" height="6" fill="#fff"/>
<text x="12.1" y="1442.8" font-size="22" fill="#fff" text-anchor="start" font-weight="normal" stroke="#fff" stroke-width="0.7" textLength="50.0" lengthAdjust="spacingAndGlyphs" >9/30</text>
<text x="110.5" y="1442.8" font-size="22" fill="#fff" text-anchor="middle" font-weight="normal" stroke="#fff" stroke-width="0.7" textLength="61.0" lengthAdjust="spacingAndGlyphs" >12/31</text>
<text x="208.9" y="1442.8" font-size="22" fill="#fff" text-anchor="middle" font-weight="normal" stroke="#fff" stroke-width="0.7" textLength="50.0" lengthAdjust="spacingAndGlyphs" >3/31</text>
<text x="305.3" y="1442.8" font-size="22" fill="#fff" text-anchor="middle" font-weight="normal" stroke="#fff" stroke-width="0.7" textLength="50.0" lengthAdjust="spacingAndGlyphs" >6/30</text>
<text x="402.6" y="1442.8" font-size="22" fill="#fff" text-anchor="middle" font-weight="normal" stroke="#fff" stroke-width="0.7" textLength="50.0" lengthAdjust="spacingAndGlyphs" >9/30</text>
<text x="498.6" y="1442.8" font-size="22" fill="#fff" text-anchor="middle" font-weight="normal" stroke="#fff" stroke-width="0.7" textLength="61.0" lengthAdjust="spacingAndGlyphs" >12/31</text>
<text x="594.4" y="1442.8" font-size="22" fill="#fff" text-anchor="middle" font-weight="normal" stroke="#fff" stroke-width="0.7" textLength="50.0" lengthAdjust="spacingAndGlyphs" >3/31</text>
<text x="691.9" y="1442.8" font-size="22" fill="#fff" text-anchor="middle" font-weight="normal" stroke="#fff" stroke-width="0.7" textLength="50.0" lengthAdjust="spacingAndGlyphs" >6/30</text>
<text x="787.6" y="1442.8" font-size="22" fill="#fff" text-anchor="middle" font-weight="normal" stroke="#fff" stroke-width="0.7" textLength="50.0" lengthAdjust="spacingAndGlyphs" >9/30</text>
<text x="885.4" y="1442.8" font-size="22" fill="#fff" text-anchor="middle" font-weight="normal" stroke="#fff" stroke-width="0.7" textLength="61.0" lengthAdjust="spacingAndGlyphs" >12/31</text>
<text x="981.4" y="1442.8" font-size="22" fill="#fff" text-anchor="middle" font-weight="normal" stroke="#fff" stroke-width="0.7" textLength="50.0" lengthAdjust="spacingAndGlyphs" >3/31</text>
<text x="1077.3" y="1442.8" font-size="22" fill="#fff" text-anchor="middle" font-weight="normal" stroke="#fff" stroke-width="0.7" textLength="50.0" lengthAdjust="spacingAndGlyphs" >6/30</text>
<text x="1174.5" y="1442.8" font-size="22" fill="#fff" text-anchor="middle" font-weight="normal" stroke="#fff" stroke-width="0.7" textLength="50.0" lengthAdjust="spacingAndGlyphs" >9/30</text>
<text x="1270.5" y="1442.8" font-size="22" fill="#fff" text-anchor="middle" font-weight="normal" stroke="#fff" stroke-width="0.7" textLength="61.0" lengthAdjust="spacingAndGlyphs" >12/31</text>
<text x="1368.0" y="1442.8" font-size="22" fill="#fff" text-anchor="middle" font-weight="normal" stroke="#fff" stroke-width="0.7" textLength="50.0" lengthAdjust="spacingAndGlyphs" >3/31</text>
<text x="1464.3" y="1442.8" font-size="22" fill="#fff" text-anchor="end" font-weight="normal" stroke="#fff" stroke-width="0.7" textLength="50.0" lengthAdjust="spacingAndGlyphs" >6/30</text>
<rect x="910" y="1210.3" width="317" height="132.3" rx="5" fill="#101b29" fill-opacity="0.82" stroke="#050505" stroke-width="2"/>
<rect x="940.3" y="1226" width="23.7" height="20.5" fill="#fff"/>
<rect x="923.5" y="1230.6" width="12" height="9.7" fill="none" stroke="#8a8a8a" stroke-width="1.3"/><line x1="926" y1="1235.5" x2="933" y2="1235.5" stroke="#8a8a8a" stroke-width="1.3"/>
<polyline points="930.6,1240.3 930.6,1317.5 937,1317.5" fill="none" stroke="#8a8a8a" stroke-width="1.3"/>
<line x1="928" y1="1264.7" x2="937" y2="1264.7" stroke="#8a8a8a" stroke-width="1.3"/><line x1="928" y1="1290.8" x2="963" y2="1290.8" stroke="#8a8a8a" stroke-width="1.3"/>
<line x1="953.5" y1="1254" x2="953.5" y2="1272" stroke="#8a8a8a" stroke-width="1.3"/><line x1="946" y1="1254" x2="961" y2="1254" stroke="#8a8a8a" stroke-width="1.3"/>
<line x1="953.5" y1="1307" x2="953.5" y2="1325" stroke="#8a8a8a" stroke-width="1.3"/><line x1="946" y1="1326" x2="961" y2="1326" stroke="#8a8a8a" stroke-width="1.3"/>
<polygon points="953.5,1286 957.5,1290.8 953.5,1295.6 949.5,1290.8" fill="none" stroke="#8a8a8a" stroke-width="1.3"/>
<text x="970.0" y="1246.2" font-size="22.5" fill="#fff" text-anchor="start" font-weight="normal" stroke="#fff" stroke-width="0.7" textLength="110.5" lengthAdjust="spacingAndGlyphs" >Last Price</text>
<text x="1212.8" y="1246.2" font-size="22.5" fill="#fff" text-anchor="end" font-weight="normal" stroke="#fff" stroke-width="0.7" textLength="43.0" lengthAdjust="spacingAndGlyphs" >1.20</text>
<text x="970.0" y="1273.3" font-size="22.5" fill="#fff" text-anchor="start" font-weight="normal" stroke="#fff" stroke-width="0.7" textLength="187.0" lengthAdjust="spacingAndGlyphs" >High on 03/31/23</text>
<text x="1212.8" y="1273.3" font-size="22.5" fill="#fff" text-anchor="end" font-weight="normal" stroke="#fff" stroke-width="0.7" textLength="43.0" lengthAdjust="spacingAndGlyphs" >4.60</text>
<text x="970.0" y="1300.3" font-size="22.5" fill="#fff" text-anchor="start" font-weight="normal" stroke="#fff" stroke-width="0.7" textLength="83.0" lengthAdjust="spacingAndGlyphs" >Average</text>
<text x="1212.8" y="1300.3" font-size="22.5" fill="#fff" text-anchor="end" font-weight="normal" stroke="#fff" stroke-width="0.7" textLength="43.0" lengthAdjust="spacingAndGlyphs" >2.54</text>
<text x="970.0" y="1327.4" font-size="22.5" fill="#fff" text-anchor="start" font-weight="normal" stroke="#fff" stroke-width="0.7" textLength="178.0" lengthAdjust="spacingAndGlyphs" >Low on 12/31/22</text>
<text x="1212.8" y="1327.4" font-size="22.5" fill="#fff" text-anchor="end" font-weight="normal" stroke="#fff" stroke-width="0.7" textLength="43.0" lengthAdjust="spacingAndGlyphs" >0.60</text>
<polygon points="1490.5,1305.8 1501.6,1291.9 1552.6,1291.9 1552.6,1320.4 1501.6,1320.4" fill="#fff" stroke="#222" stroke-width="1"/>
<text x="1506.2" y="1314.8" font-size="21.5" fill="#000" text-anchor="start" font-weight="normal" stroke="#000" stroke-width="0.5" textLength="42.0" lengthAdjust="spacingAndGlyphs" >1.20</text>
<rect x="1553" y="744" width="1592" height="707" fill="#000"/>
<polygon points="1631.5,1274.3 1760.7,1164.3 1872.5,1283.6 1994.3,1007.3 2106.2,994.3 2223.6,940.5 2341.6,1204.4 2448.6,798.4 2565.4,1216.8 2688.4,1346.6 2810.8,1120.4 2922.6,1060.9 2922.6,1403.0 1631.5,1403.0" fill="#021b3b"/>
<clipPath id="fD"><polygon points="1631.5,1274.3 1760.7,1164.3 1872.5,1283.6 1994.3,1007.3 2106.2,994.3 2223.6,940.5 2341.6,1204.4 2448.6,798.4 2565.4,1216.8 2688.4,1346.6 2810.8,1120.4 2922.6,1060.9 2922.6,1403.0 1631.5,1403.0"/></clipPath>
<g >
<line x1="1760.7" y1="746" x2="1760.7" y2="1403" stroke="#808080" stroke-width="1.7" stroke-dasharray="4.2,2.5" stroke-opacity="1"/>
<line x1="1872.5" y1="746" x2="1872.5" y2="1403" stroke="#808080" stroke-width="1.7" stroke-dasharray="4.2,2.5" stroke-opacity="1"/>
<line x1="1994.3" y1="746" x2="1994.3" y2="1403" stroke="#808080" stroke-width="1.7" stroke-dasharray="4.2,2.5" stroke-opacity="1"/>
<line x1="2106.2" y1="746" x2="2106.2" y2="1403" stroke="#808080" stroke-width="1.7" stroke-dasharray="4.2,2.5" stroke-opacity="1"/>
<line x1="2223.6" y1="746" x2="2223.6" y2="1403" stroke="#808080" stroke-width="1.7" stroke-dasharray="4.2,2.5" stroke-opacity="1"/>
<line x1="2341.6" y1="746" x2="2341.6" y2="1403" stroke="#808080" stroke-width="1.7" stroke-dasharray="4.2,2.5" stroke-opacity="1"/>
<line x1="2448.6" y1="746" x2="2448.6" y2="1403" stroke="#808080" stroke-width="1.7" stroke-dasharray="4.2,2.5" stroke-opacity="1"/>
<line x1="2565.4" y1="746" x2="2565.4" y2="1403" stroke="#808080" stroke-width="1.7" stroke-dasharray="4.2,2.5" stroke-opacity="1"/>
<line x1="2688.4" y1="746" x2="2688.4" y2="1403" stroke="#808080" stroke-width="1.7" stroke-dasharray="4.2,2.5" stroke-opacity="1"/>
<line x1="2810.8" y1="746" x2="2810.8" y2="1403" stroke="#808080" stroke-width="1.7" stroke-dasharray="4.2,2.5" stroke-opacity="1"/>
<line x1="2922.6" y1="746" x2="2922.6" y2="1403" stroke="#808080" stroke-width="1.7" stroke-dasharray="4.2,2.5" stroke-opacity="1"/>
<line x1="3044.2" y1="746" x2="3044.2" y2="1403" stroke="#808080" stroke-width="1.7" stroke-dasharray="4.2,2.5" stroke-opacity="1"/>
<line x1="1632.5" y1="746" x2="1632.5" y2="1403" stroke="#808080" stroke-width="1.7" stroke-dasharray="4.2,2.5" stroke-opacity="1"/>
<line x1="1632" y1="797.0" x2="3083" y2="797.0" stroke="#808080" stroke-width="1.7" stroke-dasharray="4.5,2.6" stroke-opacity="1"/>
<line x1="1632" y1="881.1" x2="3083" y2="881.1" stroke="#808080" stroke-width="1.7" stroke-dasharray="4.5,2.6" stroke-opacity="1"/>
<line x1="1632" y1="965.2" x2="3083" y2="965.2" stroke="#808080" stroke-width="1.7" stroke-dasharray="4.5,2.6" stroke-opacity="1"/>
<line x1="1632" y1="1049.3" x2="3083" y2="1049.3" stroke="#808080" stroke-width="1.7" stroke-dasharray="4.5,2.6" stroke-opacity="1"/>
<line x1="1632" y1="1133.5" x2="3083" y2="1133.5" stroke="#808080" stroke-width="1.7" stroke-dasharray="4.5,2.6" stroke-opacity="1"/>
<line x1="1632" y1="1217.6" x2="3083" y2="1217.6" stroke="#808080" stroke-width="1.7" stroke-dasharray="4.5,2.6" stroke-opacity="1"/>
<line x1="1632" y1="1301.7" x2="3083" y2="1301.7" stroke="#808080" stroke-width="1.7" stroke-dasharray="4.5,2.6" stroke-opacity="1"/>
<line x1="1632" y1="1385.8" x2="3083" y2="1385.8" stroke="#808080" stroke-width="1.7" stroke-dasharray="4.5,2.6" stroke-opacity="1"/>
</g>
<g clip-path="url(#fD)">
<polygon points="1631.5,1274.3 1760.7,1164.3 1872.5,1283.6 1994.3,1007.3 2106.2,994.3 2223.6,940.5 2341.6,1204.4 2448.6,798.4 2565.4,1216.8 2688.4,1346.6 2810.8,1120.4 2922.6,1060.9 2922.6,1403.0 1631.5,1403.0" fill="#021b3b"/>
<line x1="1760.7" y1="746" x2="1760.7" y2="1403" stroke="#63809f" stroke-width="1.7" stroke-dasharray="4.2,2.5" stroke-opacity="1"/>
<line x1="1872.5" y1="746" x2="1872.5" y2="1403" stroke="#63809f" stroke-width="1.7" stroke-dasharray="4.2,2.5" stroke-opacity="1"/>
<line x1="1994.3" y1="746" x2="1994.3" y2="1403" stroke="#63809f" stroke-width="1.7" stroke-dasharray="4.2,2.5" stroke-opacity="1"/>
<line x1="2106.2" y1="746" x2="2106.2" y2="1403" stroke="#63809f" stroke-width="1.7" stroke-dasharray="4.2,2.5" stroke-opacity="1"/>
<line x1="2223.6" y1="746" x2="2223.6" y2="1403" stroke="#63809f" stroke-width="1.7" stroke-dasharray="4.2,2.5" stroke-opacity="1"/>
<line x1="2341.6" y1="746" x2="2341.6" y2="1403" stroke="#63809f" stroke-width="1.7" stroke-dasharray="4.2,2.5" stroke-opacity="1"/>
<line x1="2448.6" y1="746" x2="2448.6" y2="1403" stroke="#63809f" stroke-width="1.7" stroke-dasharray="4.2,2.5" stroke-opacity="1"/>
<line x1="2565.4" y1="746" x2="2565.4" y2="1403" stroke="#63809f" stroke-width="1.7" stroke-dasharray="4.2,2.5" stroke-opacity="1"/>
<line x1="2688.4" y1="746" x2="2688.4" y2="1403" stroke="#63809f" stroke-width="1.7" stroke-dasharray="4.2,2.5" stroke-opacity="1"/>
<line x1="2810.8" y1="746" x2="2810.8" y2="1403" stroke="#63809f" stroke-width="1.7" stroke-dasharray="4.2,2.5" stroke-opacity="1"/>
<line x1="2922.6" y1="746" x2="2922.6" y2="1403" stroke="#63809f" stroke-width="1.7" stroke-dasharray="4.2,2.5" stroke-opacity="1"/>
<line x1="3044.2" y1="746" x2="3044.2" y2="1403" stroke="#63809f" stroke-width="1.7" stroke-dasharray="4.2,2.5" stroke-opacity="1"/>
<line x1="1632.5" y1="746" x2="1632.5" y2="1403" stroke="#63809f" stroke-width="1.7" stroke-dasharray="4.2,2.5" stroke-opacity="1"/>
<line x1="1632" y1="797.0" x2="3083" y2="797.0" stroke="#63809f" stroke-width="1.7" stroke-dasharray="4.5,2.6" stroke-opacity="1"/>
<line x1="1632" y1="881.1" x2="3083" y2="881.1" stroke="#63809f" stroke-width="1.7" stroke-dasharray="4.5,2.6" stroke-opacity="1"/>
<line x1="1632" y1="965.2" x2="3083" y2="965.2" stroke="#63809f" stroke-width="1.7" stroke-dasharray="4.5,2.6" stroke-opacity="1"/>
<line x1="1632" y1="1049.3" x2="3083" y2="1049.3" stroke="#63809f" stroke-width="1.7" stroke-dasharray="4.5,2.6" stroke-opacity="1"/>
<line x1="1632" y1="1133.5" x2="3083" y2="1133.5" stroke="#63809f" stroke-width="1.7" stroke-dasharray="4.5,2.6" stroke-opacity="1"/>
<line x1="1632" y1="1217.6" x2="3083" y2="1217.6" stroke="#63809f" stroke-width="1.7" stroke-dasharray="4.5,2.6" stroke-opacity="1"/>
<line x1="1632" y1="1301.7" x2="3083" y2="1301.7" stroke="#63809f" stroke-width="1.7" stroke-dasharray="4.5,2.6" stroke-opacity="1"/>
<line x1="1632" y1="1385.8" x2="3083" y2="1385.8" stroke="#63809f" stroke-width="1.7" stroke-dasharray="4.5,2.6" stroke-opacity="1"/>
</g>
<polyline points="1631.5,1274.3 1760.7,1164.3 1872.5,1283.6 1994.3,1007.3 2106.2,994.3 2223.6,940.5 2341.6,1204.4 2448.6,798.4 2565.4,1216.8 2688.4,1346.6 2810.8,1120.4 2922.6,1060.9" fill="none" stroke="#fff" stroke-width="2.4"/>
<polyline points="1631.5,798.4 1820.6,798.4 1826.8,943.6 2016.5,943.6 2021.5,1017.2 2172.3,1017.2 2177.7,1091.3 3044.2,1091.3" fill="none" stroke="#dbb00a" stroke-width="2.2"/>
<polyline points="1632.7,1228.0 1637.0,1241.1 1642.5,1295.8 1648.0,1298.0 1653.4,1268.5 1660.0,1251.0 1664.8,1239.0 1669.9,1251.0 1676.4,1263.0 1681.5,1280.5 1687.4,1282.7 1692.8,1262.0 1698.3,1269.6 1703.8,1274.0 1709.2,1291.5 1714.7,1293.7 1720.2,1278.3 1726.1,1294.7 1732.2,1288.2 1737.7,1287.1 1743.2,1283.8 1748.6,1277.2 1755.2,1263.0 1760.7,1275.0 1765.0,1283.8 1770.5,1305.7 1776.0,1315.5 1786.9,1323.2 1792.4,1339.6 1797.9,1337.4 1804.4,1330.9 1809.9,1336.3 1815.4,1347.3 1820.6,1339.0 1826.4,1321.4 1832.7,1317.6 1838.2,1311.3 1843.3,1308.7 1849.1,1313.8 1854.6,1297.4 1860.5,1294.8 1866.0,1308.7 1871.8,1298.6 1876.9,1313.8 1882.7,1298.6 1888.2,1281.0 1893.3,1248.1 1898.8,1229.2 1904.6,1231.7 1910.5,1213.5 1916.0,1217.8 1921.6,1206.0 1927.4,1225.4 1933.2,1231.7 1938.2,1209.0 1944.3,1210.3 1948.8,1178.7 1955.2,1173.6 1960.2,1164.0 1966.0,1173.1 1971.6,1166.1 1977.4,1153.9 1982.9,1161.0 1988.7,1147.1 1994.3,1152.2 2000.1,1123.1 2004.9,1152.2 2010.5,1156.5 2015.9,1108.4 2021.8,1140.2 2027.7,1146.1 2032.9,1109.6 2038.3,1103.7 2044.2,1108.4 2049.6,1107.2 2060.6,1120.6 2071.7,1113.1 2077.8,1119.5 2082.6,1154.3 2088.4,1146.1 2094.3,1159.0 2100.2,1186.1 2110.8,1180.2 2116.5,1170.3 2121.9,1183.8 2127.8,1184.5 2133.0,1190.8 2138.4,1176.0 2144.7,1168.5 2150.9,1153.1 2160.8,1120.2 2172.1,1119.7 2178.0,1083.7 2183.9,1071.4 2189.0,1082.5 2194.5,1064.8 2199.6,1062.9 2205.3,1064.7 2211.3,1052.7 2216.6,1080.1 2222.3,1069.6 2227.7,1072.1 2233.4,1059.5 2239.1,1051.1 2244.6,1035.3 2250.3,1033.2 2255.9,1034.6 2261.4,1012.7 2267.1,1006.8 2272.8,1003.7 2278.3,1045.8 2283.3,1055.7 2289.2,1052.7 2295.1,1066.2 2300.8,1056.3 2306.1,1046.8 2311.9,1054.2 2317.0,1080.5 2327.5,1081.6 2333.4,1084.3 2340.8,1077.4 2347.1,1073.2 2352.4,1084.7 2357.6,1113.2 2364.0,1108.9 2370.3,1091.1 2375.1,1092.1 2380.8,1078.4 2386.1,1053.2 2392.0,1080.5 2397.0,1096.3 2402.8,1075.6 2407.4,1078.9 2413.9,1087.2 2418.5,1109.4 2425.0,1119.6 2429.6,1148.3 2435.2,1160.4 2441.7,1159.4 2452.4,1189.1 2457.8,1165.0 2463.9,1154.8 2469.4,1154.4 2475.0,1147.4 2480.6,1172.4 2485.6,1154.8 2491.7,1144.6 2497.2,1156.3 2502.8,1144.6 2513.9,1152.0 2519.4,1163.7 2525.0,1165.6 2531.5,1163.7 2536.5,1136.3 2542.6,1144.1 2547.2,1133.5 2553.7,1131.1 2558.3,1161.3 2575.0,1197.4 2580.6,1226.1 2586.1,1235.4 2592.6,1180.7 2597.8,1149.4 2603.9,1135.6 2608.9,1111.5 2614.4,1093.0 2620.0,1126.3 2625.0,1136.5 2631.1,1155.0 2640.4,1134.6 2648.3,1116.1 2653.3,1117.4 2659.4,1123.5 2664.4,1143.0 2669.4,1167.0 2674.6,1174.4 2681.1,1185.2 2687.2,1187.8 2692.2,1172.6 2697.2,1145.7 2703.3,1135.9 2708.9,1149.4 2715.0,1156.9 2720.0,1126.3 2726.1,1125.9 2731.7,1098.1 2737.2,1099.4 2742.8,1079.1 2748.3,1108.1 2753.9,1094.8 2759.4,1103.7 2765.4,1093.0 2770.6,1060.6 2776.1,1080.4 2782.0,1085.9 2787.2,1105.0 2792.5,1095.1 2798.1,1112.6 2804.8,1117.3 2811.9,1109.8 2820.3,1102.5 2826.2,1132.5 2831.8,1120.7 2837.5,1087.9 2843.0,1096.8 2848.6,1098.8 2859.4,1130.8 2870.8,1105.6 2876.7,1121.5 2881.8,1121.0 2890.2,1128.3 2897.7,1148.5 2904.5,1151.0 2909.9,1165.3 2915.4,1155.7 2921.3,1168.7 2927.2,1165.3 2933.1,1155.2 2938.1,1134.2 2943.2,1125.8 2949.1,1119.4 2954.1,1138.4 2960.9,1134.2 2965.4,1116.5 2971.8,1108.1 2976.9,1095.1 2982.3,1101.8 2987.6,1104.1 3004.2,1133.6 3010.3,1123.8 3015.6,1119.2 3021.3,1121.9 3027.0,1115.8 3032.3,1140.8 3038.2,1126.4 3043.6,1133.6" fill="none" stroke="#00f000" stroke-width="2.4" stroke-linejoin="round"/>
<rect x="1629" y="746" width="3.3" height="659" fill="#fff"/>
<rect x="3082.6" y="746" width="3.3" height="659" fill="#fff"/>
<rect x="1630" y="1402.9" width="1455" height="2" fill="#fff"/>
<polygon points="1614.9,798.4 1630,794.1 1630,802.7" fill="#fff"/>
<text x="1612.3" y="807.0" font-size="21" fill="#fff" text-anchor="end" font-weight="normal" stroke="#fff" stroke-width="0.7" textLength="58.0" lengthAdjust="spacingAndGlyphs" >5.500</text>
<polygon points="1614.9,944.7 1630,940.4 1630,949.0" fill="#fff"/>
<text x="1612.3" y="953.3" font-size="21" fill="#fff" text-anchor="end" font-weight="normal" stroke="#fff" stroke-width="0.7" textLength="58.0" lengthAdjust="spacingAndGlyphs" >5.000</text>
<polygon points="1614.9,1237.3 1630,1233.0 1630,1241.6" fill="#fff"/>
<text x="1612.3" y="1245.9" font-size="21" fill="#fff" text-anchor="end" font-weight="normal" stroke="#fff" stroke-width="0.7" textLength="58.0" lengthAdjust="spacingAndGlyphs" >4.000</text>
<polygon points="1614.9,1383.6 1630,1379.3 1630,1387.9" fill="#fff"/>
<text x="1612.3" y="1392.2" font-size="21" fill="#fff" text-anchor="end" font-weight="normal" stroke="#fff" stroke-width="0.7" textLength="58.0" lengthAdjust="spacingAndGlyphs" >3.500</text>
<rect x="1623" y="870.5" width="7" height="2" fill="#fff"/>
<rect x="1623" y="1016.9" width="7" height="2" fill="#fff"/>
<rect x="1623" y="1163.2" width="7" height="2" fill="#fff"/>
<rect x="1623" y="1309.5" width="7" height="2" fill="#fff"/>
<polygon points="1623,1086.7 1630,1091.0 1623,1095.3" fill="#fff"/>
<polygon points="3085,792.7 3099.7,797.0 3085,801.3" fill="#fff"/>
<text x="3101.8" y="805.3" font-size="21" fill="#fff" text-anchor="start" font-weight="normal" stroke="#fff" stroke-width="0.7" textLength="47.0" lengthAdjust="spacingAndGlyphs" >2.95</text>
<rect x="3085" y="838.1" width="6" height="2" fill="#fff"/>
<polygon points="3085,876.8 3099.7,881.1 3085,885.4" fill="#fff"/>
<text x="3101.8" y="889.4" font-size="21" fill="#fff" text-anchor="start" font-weight="normal" stroke="#fff" stroke-width="0.7" textLength="47.0" lengthAdjust="spacingAndGlyphs" >2.90</text>
<rect x="3085" y="922.2" width="6" height="2" fill="#fff"/>
<polygon points="3085,960.9 3099.7,965.2 3085,969.5" fill="#fff"/>
<text x="3101.8" y="973.5" font-size="21" fill="#fff" text-anchor="start" font-weight="normal" stroke="#fff" stroke-width="0.7" textLength="47.0" lengthAdjust="spacingAndGlyphs" >2.85</text>
<rect x="3085" y="1006.3" width="6" height="2" fill="#fff"/>
<polygon points="3085,1045.0 3099.7,1049.3 3085,1053.6" fill="#fff"/>
<text x="3101.8" y="1057.6" font-size="21" fill="#fff" text-anchor="start" font-weight="normal" stroke="#fff" stroke-width="0.7" textLength="47.0" lengthAdjust="spacingAndGlyphs" >2.80</text>
<rect x="3085" y="1090.4" width="6" height="2" fill="#fff"/>
<polygon points="3085,1129.2 3099.7,1133.5 3085,1137.8" fill="#fff"/>
<text x="3101.8" y="1141.8" font-size="21" fill="#fff" text-anchor="start" font-weight="normal" stroke="#fff" stroke-width="0.7" textLength="47.0" lengthAdjust="spacingAndGlyphs" >2.75</text>
<rect x="3085" y="1174.5" width="6" height="2" fill="#fff"/>
<polygon points="3085,1213.3 3099.7,1217.6 3085,1221.9" fill="#fff"/>
<text x="3101.8" y="1225.9" font-size="21" fill="#fff" text-anchor="start" font-weight="normal" stroke="#fff" stroke-width="0.7" textLength="47.0" lengthAdjust="spacingAndGlyphs" >2.70</text>
<rect x="3085" y="1258.6" width="6" height="2" fill="#fff"/>
<polygon points="3085,1297.4 3099.7,1301.7 3085,1306.0" fill="#fff"/>
<text x="3101.8" y="1310.0" font-size="21" fill="#fff" text-anchor="start" font-weight="normal" stroke="#fff" stroke-width="0.7" textLength="47.0" lengthAdjust="spacingAndGlyphs" >2.65</text>
<rect x="3085" y="1342.7" width="6" height="2" fill="#fff"/>
<polygon points="3085,1381.5 3099.7,1385.8 3085,1390.1" fill="#fff"/>
<text x="3101.8" y="1394.1" font-size="21" fill="#fff" text-anchor="start" font-weight="normal" stroke="#fff" stroke-width="0.7" textLength="47.0" lengthAdjust="spacingAndGlyphs" >2.60</text>
<rect x="1759.9" y="1404" width="1.6" height="5.5" fill="#fff"/>
<rect x="1871.7" y="1404" width="1.6" height="5.5" fill="#fff"/>
<rect x="1993.5" y="1404" width="1.6" height="5.5" fill="#fff"/>
<rect x="2105.4" y="1404" width="1.6" height="5.5" fill="#fff"/>
<rect x="2222.8" y="1404" width="1.6" height="5.5" fill="#fff"/>
<rect x="2340.8" y="1404" width="1.6" height="5.5" fill="#fff"/>
<rect x="2447.8" y="1404" width="1.6" height="5.5" fill="#fff"/>
<rect x="2564.6" y="1404" width="1.6" height="5.5" fill="#fff"/>
<rect x="2687.6" y="1404" width="1.6" height="5.5" fill="#fff"/>
<rect x="2810.0" y="1404" width="1.6" height="5.5" fill="#fff"/>
<rect x="2921.8" y="1404" width="1.6" height="5.5" fill="#fff"/>
<rect x="3043.4" y="1404" width="1.6" height="5.5" fill="#fff"/>
<rect x="1629.5" y="1403" width="7" height="7" fill="#fff"/>
<text x="1696.1" y="1426.5" font-size="21.5" fill="#fff" text-anchor="middle" font-weight="normal" stroke="#fff" stroke-width="0.7" textLength="39.0" lengthAdjust="spacingAndGlyphs" >Aug</text>
<text x="1816.6" y="1426.5" font-size="21.5" fill="#fff" text-anchor="middle" font-weight="normal" stroke="#fff" stroke-width="0.7" textLength="38.4" lengthAdjust="spacingAndGlyphs" >Sep</text>
<text x="1933.4" y="1426.5" font-size="21.5" fill="#fff" text-anchor="middle" font-weight="normal" stroke="#fff" stroke-width="0.7" textLength="36.9" lengthAdjust="spacingAndGlyphs" >Oct</text>
<text x="2050.2" y="1426.5" font-size="21.5" fill="#fff" text-anchor="middle" font-weight="normal" stroke="#fff" stroke-width="0.7" textLength="41.3" lengthAdjust="spacingAndGlyphs" >Nov</text>
<text x="2164.9" y="1426.5" font-size="21.5" fill="#fff" text-anchor="middle" font-weight="normal" stroke="#fff" stroke-width="0.7" textLength="40.4" lengthAdjust="spacingAndGlyphs" >Dec</text>
<text x="2282.6" y="1426.5" font-size="21.5" fill="#fff" text-anchor="middle" font-weight="normal" stroke="#fff" stroke-width="0.7" textLength="39.0" lengthAdjust="spacingAndGlyphs" >Jan</text>
<text x="2395.1" y="1426.5" font-size="21.5" fill="#fff" text-anchor="middle" font-weight="normal" stroke="#fff" stroke-width="0.7" textLength="40.4" lengthAdjust="spacingAndGlyphs" >Feb</text>
<text x="2507.0" y="1426.5" font-size="21.5" fill="#fff" text-anchor="middle" font-weight="normal" stroke="#fff" stroke-width="0.7" textLength="39.6" lengthAdjust="spacingAndGlyphs" >Mar</text>
<text x="2626.9" y="1426.5" font-size="21.5" fill="#fff" text-anchor="middle" font-weight="normal" stroke="#fff" stroke-width="0.7" textLength="36.7" lengthAdjust="spacingAndGlyphs" >Apr</text>
<text x="2749.6" y="1426.5" font-size="21.5" fill="#fff" text-anchor="middle" font-weight="normal" stroke="#fff" stroke-width="0.7" textLength="42.2" lengthAdjust="spacingAndGlyphs" >May</text>
<text x="2866.7" y="1426.5" font-size="21.5" fill="#fff" text-anchor="middle" font-weight="normal" stroke="#fff" stroke-width="0.7" textLength="39.3" lengthAdjust="spacingAndGlyphs" >Jun</text>
<text x="2983.4" y="1426.5" font-size="21.5" fill="#fff" text-anchor="middle" font-weight="normal" stroke="#fff" stroke-width="0.7" textLength="34.9" lengthAdjust="spacingAndGlyphs" >Jul</text>
<text x="1927.5" y="1449.7" font-size="21" fill="#fff" text-anchor="middle" font-weight="normal" stroke="#fff" stroke-width="0.7" textLength="52.0" lengthAdjust="spacingAndGlyphs" >2024</text>
<text x="2653.0" y="1449.7" font-size="21" fill="#fff" text-anchor="middle" font-weight="normal" stroke="#fff" stroke-width="0.7" textLength="52.0" lengthAdjust="spacingAndGlyphs" >2025</text>
<rect x="2222.5" y="1429" width="1.5" height="22" fill="#777"/>
<rect x="2504.3" y="779.7" width="548.2" height="92.5" rx="5" fill="#111111" fill-opacity="0.9"/>
<rect x="2518.5" y="792.8" width="24.7" height="18.4" fill="#fff"/>
<rect x="2518.5" y="817" width="24.7" height="18.8" fill="#dfbe14"/>
<rect x="2518.5" y="840.7" width="24.7" height="19.7" fill="#00f000"/>
<text x="2549.5" y="811.2" font-size="21" fill="#fff" text-anchor="start" font-weight="normal" stroke="#fff" stroke-width="0.7" word-spacing="4" xml:space="preserve" textLength="249.0" lengthAdjust="spacingAndGlyphs" >CORE PCE YOY %  (R1)</text>
<text x="2549.5" y="835.3" font-size="21" fill="#fff" text-anchor="start" font-weight="normal" stroke="#fff" stroke-width="0.7" word-spacing="4" xml:space="preserve" textLength="378.5" lengthAdjust="spacingAndGlyphs" >FED TARGET UPPER BOUND % (L1)</text>
<text x="2549.5" y="859.1" font-size="21" fill="#fff" text-anchor="start" font-weight="normal" stroke="#fff" stroke-width="0.7" word-spacing="4" xml:space="preserve" textLength="297.0" lengthAdjust="spacingAndGlyphs" >UST 10&#x2013;YEAR YIELD % (L1)</text>
<text x="2941.4" y="811.2" font-size="21" fill="#fff" text-anchor="start" font-weight="normal" stroke="#fff" stroke-width="0.7" textLength="98.0" lengthAdjust="spacingAndGlyphs" >2.793240</text>
<text x="2941.4" y="835.3" font-size="21" fill="#fff" text-anchor="start" font-weight="normal" stroke="#fff" stroke-width="0.7" textLength="58.0" lengthAdjust="spacingAndGlyphs" >4.500</text>
<text x="2941.4" y="859.1" font-size="21" fill="#fff" text-anchor="start" font-weight="normal" stroke="#fff" stroke-width="0.7" textLength="58.0" lengthAdjust="spacingAndGlyphs" >4.347</text>
<polygon points="1553,1078.9 1619,1078.9 1629.2,1091.5 1619,1104.2 1553,1104.2" fill="#dfbe14"/>
<text x="1557.6" y="1099.1" font-size="19.5" fill="#000" text-anchor="start" font-weight="normal" stroke="#000" stroke-width="0.5" textLength="58.0" lengthAdjust="spacingAndGlyphs" >4.500</text>
<polygon points="1553,1121.9 1619,1121.9 1629.2,1134.7 1619,1147.5 1553,1147.5" fill="#00f000"/>
<text x="1557.6" y="1142.9" font-size="19.5" fill="#000" text-anchor="start" font-weight="normal" stroke="#000" stroke-width="0.5" textLength="58.0" lengthAdjust="spacingAndGlyphs" >4.347</text>
<polygon points="3086,1061.3 3097.4,1047.7 3150,1047.7 3150,1074.4 3097.4,1074.4" fill="#fff" stroke="#222" stroke-width="1"/>
<text x="3100.4" y="1069.4" font-size="20" fill="#000" text-anchor="start" font-weight="normal" stroke="#000" stroke-width="0.5" textLength="58.0" lengthAdjust="spacingAndGlyphs" >2.793</text>
</svg></body></html>
